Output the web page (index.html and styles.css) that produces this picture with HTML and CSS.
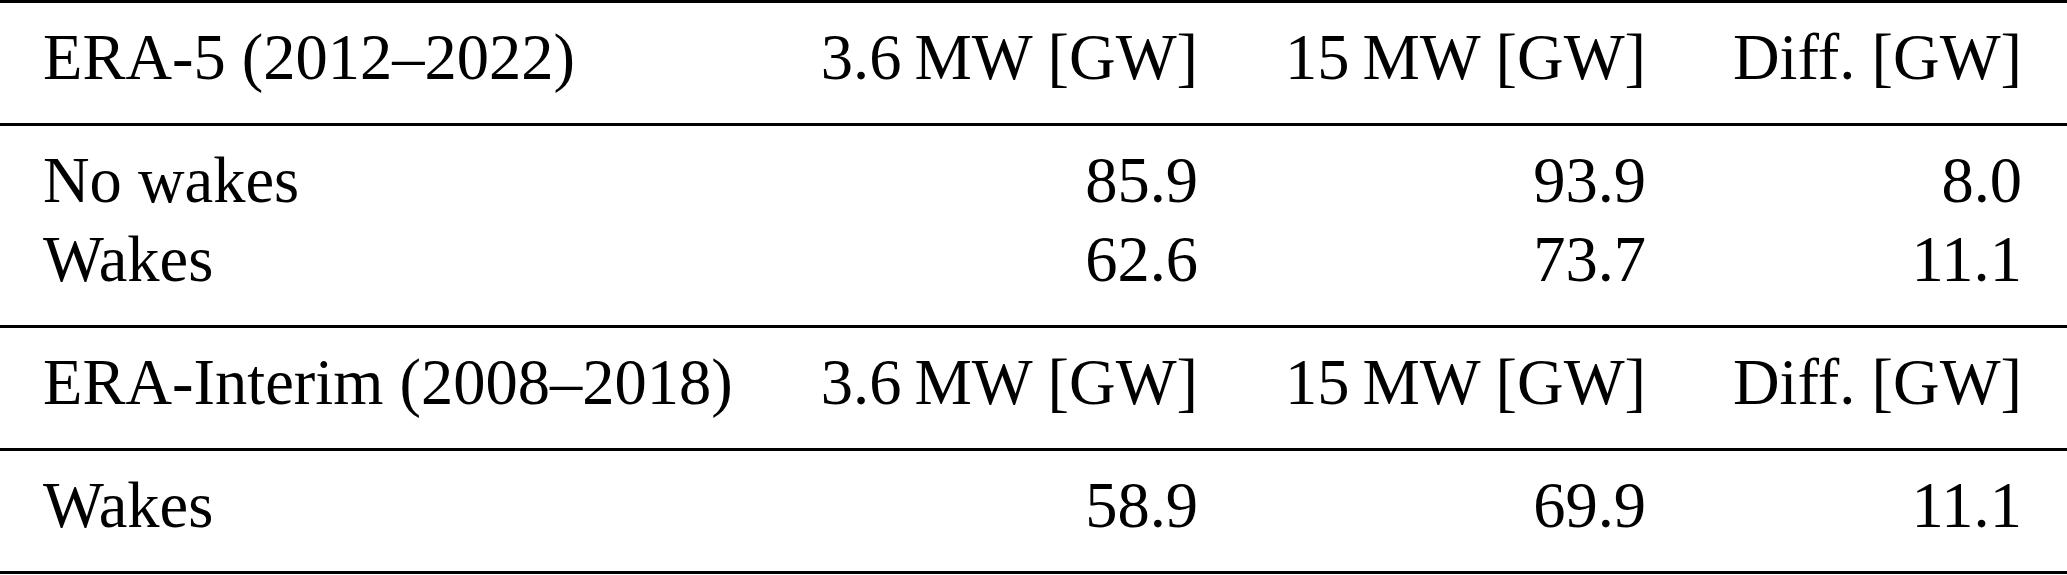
FILE: index.html
```html
<!DOCTYPE html>
<html lang="en">
<head>
    <meta charset="UTF-8">
    <title>Wake losses: ERA-5 vs ERA-Interim</title>
    <link rel="stylesheet" href="styles.css">
</head>
<body>
    <table class="results">
        <colgroup>
            <col class="col-label">
            <col class="col-small">
            <col class="col-large">
            <col class="col-diff">
        </colgroup>

        <!-- ERA-5 block -->
        <tbody>
            <tr class="head top">
                <td>ERA-5 (2012–2022)</td>
                <td class="num">3.6&thinsp;MW [GW]</td>
                <td class="num">15&thinsp;MW [GW]</td>
                <td class="num">Diff. [GW]</td>
            </tr>
            <tr class="first">
                <td>No wakes</td>
                <td class="num">85.9</td>
                <td class="num">93.9</td>
                <td class="num">8.0</td>
            </tr>
            <tr class="last">
                <td>Wakes</td>
                <td class="num">62.6</td>
                <td class="num">73.7</td>
                <td class="num">11.1</td>
            </tr>
        </tbody>

        <!-- ERA-Interim block -->
        <tbody>
            <tr class="head">
                <td>ERA-Interim (2008–2018)</td>
                <td class="num">3.6&thinsp;MW [GW]</td>
                <td class="num">15&thinsp;MW [GW]</td>
                <td class="num">Diff. [GW]</td>
            </tr>
            <tr class="first last">
                <td>Wakes</td>
                <td class="num">58.9</td>
                <td class="num">69.9</td>
                <td class="num">11.1</td>
            </tr>
        </tbody>
    </table>
</body>
</html>
```

FILE: styles.css
```css
body {
    margin: 0;
    background-color: #fff;
    color: #000;
    font-family: "Liberation Serif", "Times New Roman", serif;
}

.results {
    width: 2067px;
    table-layout: fixed;
    border-collapse: separate;
    border-spacing: 0;
    font-size: 64.5px;
    line-height: 79px;
}

.col-label { width: 820px; }
.col-small { width: 378px; }
.col-large { width: 448px; }
.col-diff  { width: 421px; }

.results td {
    padding: 0;
    white-space: nowrap;
    vertical-align: top;
}

.results td:first-child {
    padding-left: 43px;
    text-align: left;
}

.results td:last-child {
    padding-right: 45px;
}

.results .num {
    text-align: right;
}

/* rules */
.results tr.top td {
    border-top: 3px solid #000;
}

.results tr.head td {
    padding-top: 15px;
    padding-bottom: 26px;
    border-bottom: 3px solid #000;
}

.results tr.first td {
    padding-top: 15px;
}

.results tr.last td {
    padding-bottom: 26px;
    border-bottom: 3px solid #000;
}
```
